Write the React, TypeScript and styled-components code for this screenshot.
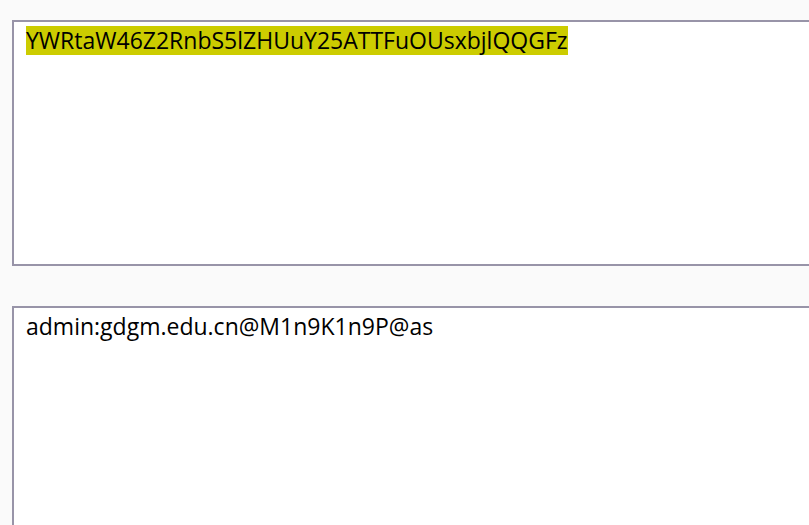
import styled, { createGlobalStyle } from "styled-components";

const GlobalStyles = createGlobalStyle`
  html, body {
    margin: 0;
    padding: 0;
    background: #fafafa;
    overflow: hidden;
  }
`;

const Page = styled.div`
  display: flex;
  flex-direction: column;
  gap: 40px;
  padding: 20px 0 0 12px;
  width: 960px;
  height: 525px;
  box-sizing: border-box;
  font-family: "Open Sans", "Noto Sans", sans-serif;
  font-size: 23px;
  color: #000;
`;

const TextBox = styled.div<{ $height: number }>`
  box-sizing: border-box;
  height: ${(p) => p.$height}px;
  flex-shrink: 0;
  border: 2px solid #9894a8;
  background: #fff;
  padding: 4px 12px;
  line-height: 29px;
  white-space: pre-wrap;
`;

const Highlight = styled.mark`
  display: inline-block;
  vertical-align: top;
  line-height: 29px;
  background: #cccc00;
  color: #000;
`;

const App = () => {
  return (
    <>
      <GlobalStyles />
      <Page>
        <TextBox $height={246}>
          <Highlight>YWRtaW46Z2RnbS5lZHUuY25ATTFuOUsxbjlQQGFz</Highlight>
        </TextBox>
        <TextBox $height={246}>admin:gdgm.edu.cn@M1n9K1n9P@as</TextBox>
      </Page>
    </>
  );
};

export default App;
